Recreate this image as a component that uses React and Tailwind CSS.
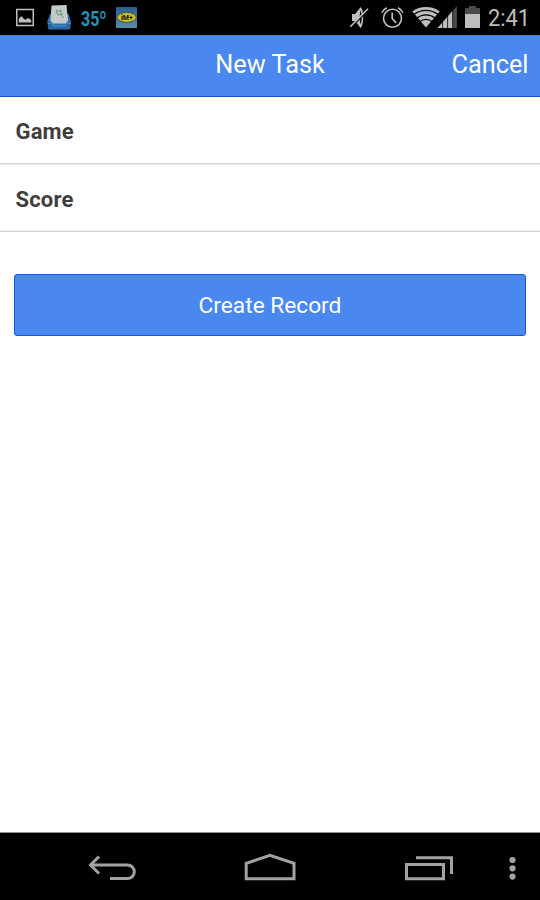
function StatusBar() {
  return (
    <div className="flex h-[35px] shrink-0 items-center bg-black pl-4 pr-[10px] text-[#bebebe]">
      <svg className="h-[35px] w-[18px]" viewBox="16 0 18 35" fill="none">
        <rect x="16.75" y="9.5" width="16.5" height="16" stroke="#bebebe" strokeWidth="1.5" />
        <path d="M18.7 22.5v-3l1.600-2.800 1.800-.2 1.500 2.200 1.800 1.100 2.200-1.500 1.700.2 2 2v2z" fill="#bebebe" />
      </svg>
      <svg className="ml-[13px] h-[35px] w-[24px]" viewBox="47 0 24 35" fill="none">
        <path d="M50 14l-2.800 8.500 1 6.800h21.600l1.200-7L68.500 14z" fill="#174a7c" />
        <path d="M50 14l-2.800 8.500h5l1.500 3h11l1.700-3H71L68.500 14z" fill="#2b70b0" />
        <path d="M51.500 5.500L66.500 5l1.500 15.500-2.200 3H53l-2.500-3z" fill="#c2c9c9" />
        <path d="M48 23h4l1.500 2.800h11.700l1.800-2.800h4l-1.200 6.500H48.500z" fill="#2769a8" />
        <path d="M48.200 23.200h3.900l1.500 2.700h11.600l1.800-2.700h3.700" stroke="#65a3d3" strokeWidth=".8" />
        <path d="M56 10l2.500 1.500L61 10l-.5 2.500 2 1.500-2.700.3-1.300 1.500-.8-2.300-2-.7 1.200-1zM60 14l4 4" stroke="#62906c" strokeWidth=".9" />
      </svg>
      <span className="ml-[9.5px] mt-[2px] w-[26px] origin-left scale-x-[0.76] whitespace-nowrap text-[21px] font-bold leading-[24px] text-[#2b93b8]">35º</span>
      <svg className="ml-[9.5px] h-[35px] w-[21px]" viewBox="116 0 21 35">
        <defs>
          <linearGradient id="chat" x1="0" y1="0" x2="0" y2="1">
            <stop stopColor="#285f90" />
            <stop offset="1" stopColor="#598ba9" />
          </linearGradient>
        </defs>
        <rect x="116" y="7" width="21" height="21" rx="1" fill="url(#chat)" />
        <ellipse cx="126.7" cy="17.4" rx="9.4" ry="4.9" fill="#d2c125" stroke="#293d3c" strokeWidth=".7" />
        <text x="126.8" y="19.9" textAnchor="middle" fontSize="7" fontWeight="900" fill="#222b18">iM+</text>
      </svg>

      <svg className="ml-auto h-[35px] w-[20px]" viewBox="349 0 20 35" fill="none">
        <path d="M352 14h3.200l5.300-6.800c1.800 1.200 2.700 5 2.700 10s-.9 9.600-2.700 10.800L355.200 21H352z" fill="#bebebe" />
        <path d="M360.600 10.500c.9 1.500 1.100 4.500 1.100 7s-.2 5.300-1.100 6.800c-.7-1.500-.9-4.300-.9-6.800s.2-5.500.9-7z" fill="#111" />
        <path d="M350 28.400L368 10.200" stroke="#000" strokeWidth="1.500" />
        <path d="M350.300 26.800L368 8.800" stroke="#bebebe" strokeWidth="1.600" />
      </svg>
      <svg className="ml-3 h-[35px] w-[24px]" viewBox="381 0 24 35" fill="none" stroke="#bebebe">
        <circle cx="392.5" cy="18.300" r="9" strokeWidth="1.600" />
        <path d="M392.200 12.500v6l4 4.300" strokeWidth="1.700" />
        <path d="M381.800 12.800c1-2.200 2.800-4 5-5M398 7.800c2.200 1 4 2.800 5 5" strokeWidth="1.500" />
      </svg>
      <svg className="ml-[7px] h-[35px] w-[46px]" viewBox="412 0 46 35" fill="none">
        <path d="M412.300 11.400C416 8.500 421 7 426 7s10 1.500 13.700 4.400L426 27.500z" fill="#bebebe" />
        <path d="M413.500 14.700c7.500-5.900 17.500-5.900 25 0M416.500 18.200c5.700-4.500 13.300-4.500 19 0M419.500 21.700c4-3 9-3 13 0" stroke="#000" strokeWidth="1.200" />
        <path d="M456.900 6v22h-19.300z" fill="#4b4b4b" />
        <path d="M452.700 10.800V28h-15.100z" fill="#bebebe" />
        <path d="M442.600 21v7M447.600 16v12M452.700 10v18" stroke="#000" strokeWidth=".8" />
      </svg>
      <svg className="ml-[7px] h-[35px] w-[15px]" viewBox="465 0 15 35">
        <path d="M465 8h4V6h7v2h4v6h-15z" fill="#4b4b4b" />
        <path d="M465 14h15v14h-15z" fill="#bebebe" />
      </svg>
      <span className="ml-[8px] mt-[2px] w-[42px] origin-left scale-x-[0.95] whitespace-nowrap text-[23px] leading-[28px]">2:41</span>
    </div>
  );
}

function NavBar() {
  return (
    <nav className="flex h-[68px] shrink-0 items-center border-t border-[#929292] bg-black pl-[87px] pr-[20px]">
      <svg className="h-[67px] w-[50px]" viewBox="87 833 50 67" fill="none" stroke="#a3a3a3" strokeWidth="3">
        <path d="M99 856.500l-8.500 8.500 8.500 8.500M91 865h36.500a6.800 6.800 0 0 1 0 13.600H110" />
      </svg>
      <svg className="ml-[107px] h-[67px] w-[52px]" viewBox="244 833 52 67" fill="none" stroke="#a3a3a3" strokeWidth="3">
        <path d="M246.200 878.700v-15.300l23.800-8 24 8v15.300z" />
      </svg>
      <svg className="ml-[109px] h-[67px] w-[49px]" viewBox="405 833 49 67" fill="none" stroke="#a3a3a3" strokeWidth="3">
        <path d="M406.500 864.500h37v14.200h-37zM416 857.700h35.500v16.300" />
      </svg>
      <svg className="ml-auto h-[67px] w-[16px]" viewBox="504 833 16 67" fill="#a3a3a3">
        <circle cx="512.500" cy="860" r="3.100" />
        <circle cx="512.500" cy="868.300" r="3.100" />
        <circle cx="512.500" cy="876.600" r="3.100" />
      </svg>
    </nav>
  );
}

function Field({ label }) {
  return (
    <label className="flex shrink-0 items-center border-b pl-[15.5px] pt-[3px] text-[22px] font-bold tracking-[0.15px] text-[#3e3e3e] odd:h-[67px] odd:border-[#dadada] odd:shadow-[0_1px_0_#eeeeee] even:h-[68px] even:border-[#d3d3d3] even:shadow-[inset_0_-1px_0_#f0f0f0]">
      {label}
    </label>
  );
}

export default function App() {
  return (
    <div className="flex h-[900px] w-[540px] flex-col overflow-hidden bg-white font-['Roboto',sans-serif]">
      <StatusBar />
      <header className="grid h-[62px] shrink-0 grid-cols-3 items-center border-b border-t border-b-[#1458c8] border-t-[#437dd7] bg-[#4a87ee] pb-[3px] text-[25.3px] text-white">
        <span />
        <h1 className="text-center">New Task</h1>
        <button className="pr-[11.5px] text-right">Cancel</button>
      </header>
      <main className="flex grow flex-col">
        <div className="flex flex-col">
          <Field label="Game" />
          <Field label="Score" />
        </div>
        <button className="mx-[14px] mt-[42px] h-[62px] rounded-[3px] border border-[#1459d2] bg-[#4a87ee] pt-[3px] text-[22.7px] text-white">
          Create Record
        </button>
      </main>
      <NavBar />
    </div>
  );
}
